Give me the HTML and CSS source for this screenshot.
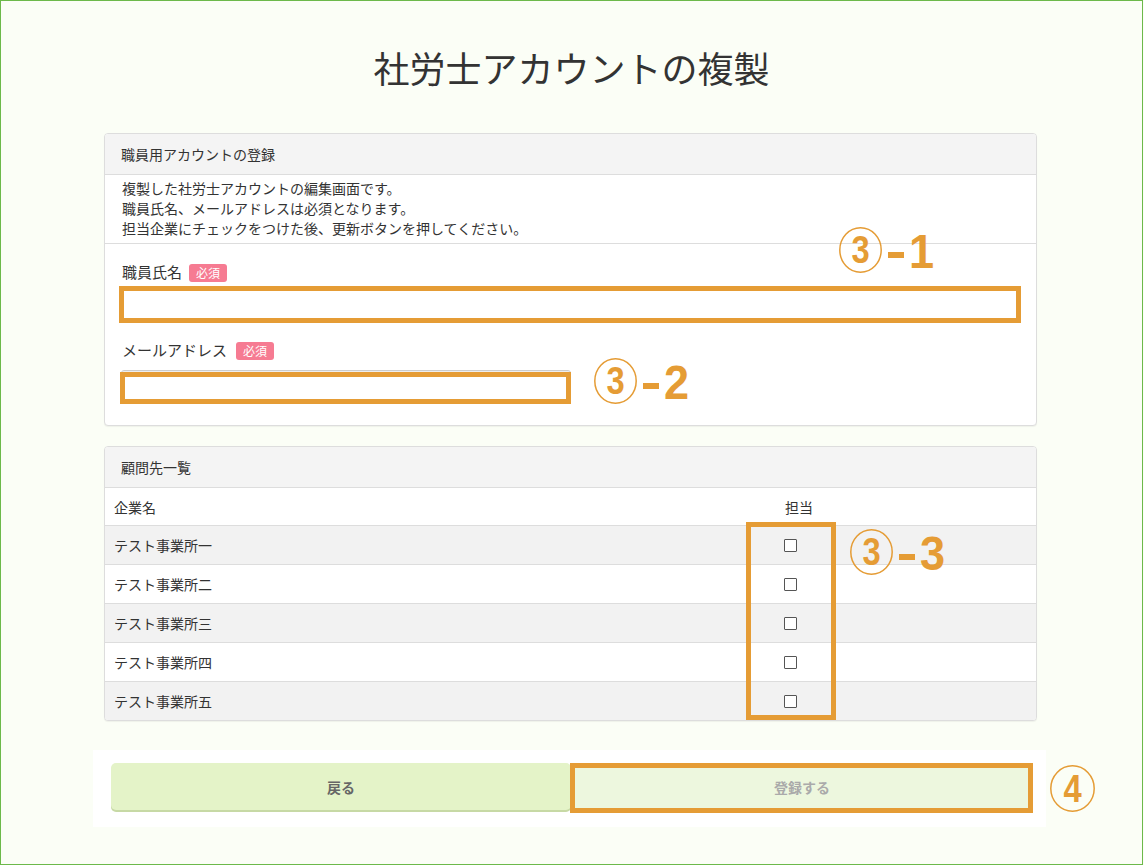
FILE: index.html
```
<!DOCTYPE html>
<html lang="ja">
<head>
<meta charset="utf-8">
<title>社労士アカウントの複製</title>
<link rel="stylesheet" href="styles.css">
</head>
<body>
<div class="frame">
  <h1 class="title">社労士アカウントの複製</h1>

  <section class="panel panel-account">
    <div class="panel-head">職員用アカウントの登録</div>
    <div class="panel-desc">
      複製した社労士アカウントの編集画面です。<br>
      職員氏名、メールアドレスは必須となります。<br>
      担当企業にチェックをつけた後、更新ボタンを押してください。
    </div>
    <div class="panel-body">
      <div class="field field-name">
        <label class="field-label">職員氏名<span class="badge">必須</span></label>
        <div class="input-wrap input-wrap-name">
          <input class="input" type="text">
          <span class="hl hl-name"></span>
        </div>
      </div>
      <div class="field field-mail">
        <label class="field-label">メールアドレス<span class="badge">必須</span></label>
        <div class="input-wrap input-wrap-mail">
          <input class="input" type="email">
          <span class="hl hl-mail"></span>
        </div>
      </div>
    </div>
  </section>

  <section class="panel panel-clients">
    <div class="panel-head">顧問先一覧</div>
    <div class="list">
      <div class="list-row list-head"><div class="cell-name">企業名</div><div class="cell-check">担当</div></div>
      <div class="list-row odd"><div class="cell-name">テスト事業所一</div><div class="cell-check"><input class="check" type="checkbox"></div></div>
      <div class="list-row"><div class="cell-name">テスト事業所二</div><div class="cell-check"><input class="check" type="checkbox"></div></div>
      <div class="list-row odd"><div class="cell-name">テスト事業所三</div><div class="cell-check"><input class="check" type="checkbox"></div></div>
      <div class="list-row"><div class="cell-name">テスト事業所四</div><div class="cell-check"><input class="check" type="checkbox"></div></div>
      <div class="list-row odd last"><div class="cell-name">テスト事業所五</div><div class="cell-check"><input class="check" type="checkbox"></div></div>
    </div>
    <span class="hl hl-check"></span>
  </section>

  <div class="actions">
    <button class="btn btn-back" type="button">戻る</button>
    <div class="btn-wrap">
      <button class="btn btn-submit" type="button">登録する</button>
      <span class="hl hl-submit"></span>
    </div>
  </div>

  <div class="note note-31">
    <span class="circled"><svg class="ring" viewBox="0 0 43 46"><ellipse cx="21.5" cy="23" rx="20.7" ry="22.2"/></svg><span class="circled-num">3</span></span><span class="dash"></span><span class="note-num">1</span>
  </div>
  <div class="note note-32">
    <span class="circled"><svg class="ring" viewBox="0 0 43 46"><ellipse cx="21.5" cy="23" rx="20.7" ry="22.2"/></svg><span class="circled-num">3</span></span><span class="dash"></span><span class="note-num">2</span>
  </div>
  <div class="note note-33">
    <span class="circled"><svg class="ring" viewBox="0 0 43 46"><ellipse cx="21.5" cy="23" rx="20.7" ry="22.2"/></svg><span class="circled-num">3</span></span><span class="dash"></span><span class="note-num">3</span>
  </div>
  <div class="note note-4">
    <span class="circled circled-4"><svg class="ring" viewBox="0 0 45 47"><ellipse cx="22.5" cy="23.5" rx="21.7" ry="22.7"/></svg><span class="circled-num">4</span></span>
  </div>
</div>
</body>
</html>
```

FILE: styles.css
```
* { box-sizing: border-box; }

html, body {
  margin: 0;
  padding: 0;
}

body {
  font-family: "Noto Sans CJK JP", "Noto Sans", sans-serif;
  color: #333;
  background: #fbfef6;
}

.frame {
  position: relative;
  width: 1143px;
  height: 865px;
  border: 1px solid #6cb94a;
  background: #fbfef6;
  overflow: hidden;
}

.title {
  margin: 40px 0;
  text-align: center;
  font-size: 36px;
  font-weight: 400;
  line-height: 52px;
  color: #333;
}

/* panels */
.panel {
  position: relative;
  width: 933px;
  margin-left: 103px;
  background: #fff;
  border: 1px solid #ddd;
  border-radius: 4px;
  box-shadow: 0 1px 1px rgba(0, 0, 0, 0.05);
}

.panel-head {
  height: 41px;
  padding: 0 16px;
  line-height: 40px;
  font-size: 14px;
  background: #f4f4f4;
  border-bottom: 1px solid #ddd;
  border-radius: 3px 3px 0 0;
}

.panel-desc {
  padding: 3px 17px 5px;
  font-size: 14px;
  line-height: 20px;
  border-bottom: 1px solid #ddd;
}

.panel-body {
  padding: 18px 15px 21px 16px;
}

.field-label {
  display: flex;
  align-items: center;
  gap: 7px;
  height: 20px;
  padding-left: 1px;
  font-size: 15px;
  line-height: 20px;
  margin-bottom: 5px;
}

.field-mail {
  margin-top: 18px;
}

.field-mail .field-label {
  margin-bottom: 10px;
  gap: 9px;
}

.badge {
  display: inline-block;
  height: 18px;
  padding: 0 7px;
  margin-top: 2px;
  line-height: 18px;
  font-size: 12px;
  color: #fff;
  background: #f67b92;
  border-radius: 3px;
}

.input-wrap {
  position: relative;
}

.input {
  display: block;
  height: 35px;
  padding: 6px 12px;
  font-size: 14px;
  font-family: inherit;
  background: #fff;
  border: 1px solid #ccc;
  border-radius: 3px;
  box-shadow: inset 0 1px 1px rgba(0, 0, 0, 0.075);
}

.input-wrap-name .input { width: 900px; }
.input-wrap-mail .input { width: 450px; height: 34px; }

/* highlight boxes (annotation overlays) */
.hl {
  position: absolute;
  border: 5px solid #e59c35;
  pointer-events: none;
}

.hl-name {
  left: -2px;
  top: -1px;
  width: 902px;
  height: 37px;
}

.hl-mail {
  left: -1px;
  top: 2px;
  width: 451px;
  height: 32px;
}

/* client list */
.panel-clients {
  margin-top: 20px;
}

.list-row {
  display: grid;
  grid-template-columns: 669px 1fr;
  align-items: center;
  height: 39px;
  font-size: 14px;
  border-top: 1px solid #ddd;
}

.list-row.list-head {
  height: 37px;
  border-top: 0;
}

.list-row.odd {
  background: #f2f2f2;
}

.list-row.last {
  border-radius: 0 0 3px 3px;
}

.cell-name {
  padding-left: 9px;
}

.cell-check {
  padding-left: 10px;
  display: flex;
  align-items: center;
}

.list-head .cell-check {
  padding-left: 11px;
}

.check {
  appearance: none;
  -webkit-appearance: none;
  width: 13px;
  height: 13px;
  margin: 0;
  background: #fff;
  border: 1px solid #555;
  border-radius: 1px;
}

.hl-check {
  left: 641px;
  top: 75px;
  width: 90px;
  height: 198px;
}

/* actions */
.actions {
  display: grid;
  grid-template-columns: 1fr 1fr;
  gap: 1px;
  width: 953px;
  margin: 29px 0 0 92px;
  padding: 13px 14px 17px 18px;
  background: #fff;
}

.btn {
  display: block;
  width: 100%;
  height: 47px;
  font-family: inherit;
  font-size: 14px;
  font-weight: 700;
  border: 0;
  border-radius: 5px;
  cursor: pointer;
}

.btn-back {
  color: #666;
  background: #e4f3c8;
  box-shadow: 0 2px 0 #c7d9a5;
}

.btn-wrap {
  position: relative;
}

.btn-submit {
  color: #aaa;
  background: #edf7de;
  box-shadow: 0 2px 0 #dde9c9;
}

.hl-submit {
  left: -2px;
  top: 0;
  width: 463px;
  height: 50px;
}

/* numbered annotations */
.note {
  position: absolute;
  display: flex;
  align-items: center;
  color: #e59c35;
  font-family: "Liberation Sans", Arial, sans-serif;
  font-weight: 700;
}

.note-31 { left: 838px; top: 223px; }
.note-32 { left: 593px; top: 354px; }
.note-33 { left: 849px; top: 525px; }
.note-4  { left: 1049px; top: 764px; }

.circled {
  position: relative;
  display: flex;
  align-items: center;
  justify-content: center;
  width: 43px;
  height: 46px;
}

.circled-4 {
  width: 45px;
  height: 47px;
}

.ring {
  position: absolute;
  inset: 0;
  width: 100%;
  height: 100%;
  fill: none;
  stroke: #e59c35;
  stroke-width: 1.5;
}

.circled-num {
  position: relative;
  font-size: 38px;
  line-height: 38px;
  transform: scaleX(0.86);
}

.dash {
  display: block;
  width: 16px;
  height: 6px;
  margin: 10px 0 0 6px;
  background: #e59c35;
}

.note-num {
  display: block;
  margin: 3px 0 0 5px;
  font-size: 49px;
  line-height: 49px;
  transform: scaleX(0.92);
  transform-origin: left center;
}
```
